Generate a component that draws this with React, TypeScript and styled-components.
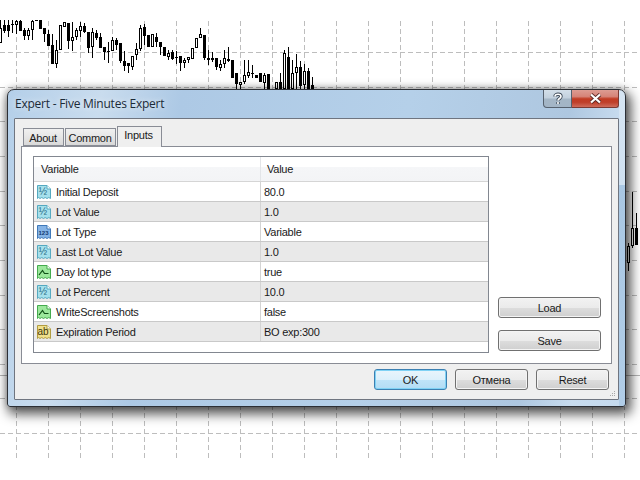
import React from 'react';
import styled, { createGlobalStyle } from 'styled-components';

const GlobalStyle = createGlobalStyle`
  html, body {
    margin: 0;
    padding: 0;
    background: #ffffff;
  }
`;

const Desktop = styled.div`
  position: relative;
  width: 640px;
  height: 480px;
  overflow: hidden;
  background: #ffffff;
  font-family: 'Liberation Sans', Arial, sans-serif;
  font-size: 11px;
  letter-spacing: -0.25px;
  color: #1a1a1a;
`;

const ChartSvg = styled.svg`
  position: absolute;
  left: 0;
  top: 0;
`;

const Window = styled.div`
  position: absolute;
  left: 7px;
  top: 89px;
  width: 619px;
  height: 318px;
  box-sizing: border-box;
  display: flex;
  flex-direction: column;
  padding: 0 6px 6px;
  border: 1px solid #2c2f35;
  border-radius: 7px 7px 3px 3px;
  background:
    linear-gradient(#d6e5f3 0, #cfe0f0 30%, #a9c7e3 30%, #b1cde7 100%) right / 6px 100% no-repeat,
    linear-gradient(100deg, #b4cfe9 0, #c9dcee 14%, #adc9e5 26%, #b5d0e9 60%, #aec7e0 84%, #c8dcef 92%, #c4d9ed 100%);
  box-shadow: 3px 5px 12px 2px rgba(0, 0, 0, 0.68), -1px -1px 6px rgba(0, 0, 0, 0.2);
`;

const TitleBar = styled.div`
  flex: none;
  height: 28px;
  display: flex;
  justify-content: space-between;
  align-items: flex-start;
`;

const Title = styled.div`
  padding: 5px 0 0 1px;
  font-family: 'Open Sans', sans-serif;
  font-size: 12px;
  letter-spacing: -0.24px;
  color: #1b2a38;
  text-shadow: 0 0 6px rgba(255, 255, 255, 0.8);
`;

const CaptionButtons = styled.div`
  display: flex;
`;

const CaptionButton = styled.div<{ $close?: boolean }>`
  height: 18px;
  width: ${(p) => (p.$close ? '47px' : '29px')};
  display: flex;
  align-items: center;
  justify-content: center;
  box-sizing: border-box;
  border: 1px solid ${(p) => (p.$close ? '#7c3a33' : '#56616e')};
  border-top: 0;
  border-left-width: ${(p) => (p.$close ? '0' : '1px')};
  border-radius: ${(p) => (p.$close ? '0 0 3px 0' : '0 0 0 4px')};
  background: ${(p) =>
    p.$close
      ? 'linear-gradient(#dd9c92 0, #d68478 38%, #c23c24 52%, #bf3f2a 72%, #cf6c5c 100%)'
      : 'linear-gradient(#d3dfe9 0, #c2d0dd 48%, #a4b6c6 52%, #a3b5c6 100%)'};
`;

const Client = styled.div`
  flex: 1;
  position: relative;
  display: flex;
  flex-direction: column;
  padding: 7px 6px 0;
  border: 1px solid #6f7580;
  border-radius: 1px;
  background: #efefef;
`;

const Tabs = styled.div`
  flex: none;
  height: 20px;
  display: flex;
  align-items: flex-end;
  padding-left: 2px;
  position: relative;
  z-index: 1;
`;

const Tab = styled.div<{ $active?: boolean; $w: number }>`
  box-sizing: border-box;
  width: ${(p) => p.$w}px;
  height: ${(p) => (p.$active ? '21px' : '18px')};
  margin-right: ${(p) => (p.$active ? '0' : '1px')};
  margin-bottom: ${(p) => (p.$active ? '-1px' : '0')};
  padding: ${(p) => (p.$active ? '2px 2px 0 0' : '3px 1px 0 0')};
  text-align: center;
  border: 1px solid #898c95;
  border-bottom: ${(p) => (p.$active ? '0' : '1px solid #898c95')};
  background: ${(p) => (p.$active ? '#efefef' : 'linear-gradient(#f0f0f0, #e6e6e6 50%, #d8d8d8)')};
`;

const TabPage = styled.div`
  flex: none;
  height: 218px;
  box-sizing: border-box;
  display: flex;
  gap: 9px;
  padding: 9px 10px 10px 11px;
  border: 1px solid #898c95;
  background: #ffffff;
`;

const ListView = styled.div`
  width: 456px;
  box-sizing: border-box;
  display: flex;
  flex-direction: column;
  border: 1px solid #828790;
`;

const HeaderRow = styled.div`
  flex: none;
  height: 25px;
  display: grid;
  grid-template-columns: 226px 1fr;
  align-items: center;
  box-sizing: border-box;
  background: linear-gradient(#ffffff 0, #ffffff 40%, #f5f6f8 42%, #f3f4f6 100%);
  border-bottom: 1px solid #d5d5d5;
`;

const HeaderCell = styled.div<{ $value?: boolean }>`
  height: 100%;
  display: flex;
  align-items: center;
  box-sizing: border-box;
  padding-left: ${(p) => (p.$value ? '6px' : '7px')};
  border-left: ${(p) => (p.$value ? '1px solid #e3e5e8' : '0')};
`;

const Row = styled.div<{ $shaded: boolean }>`
  flex: none;
  height: 20px;
  box-sizing: border-box;
  display: grid;
  grid-template-columns: 226px 1fr;
  align-items: stretch;
  background: ${(p) => (p.$shaded ? '#e9e9e9' : '#ffffff')};
  border-bottom: 1px solid #c9c9c9;
`;

const NameCell = styled.div`
  display: flex;
  align-items: center;
  gap: 4px;
  padding-left: 2px;
`;

const ValueCell = styled.div`
  display: flex;
  align-items: center;
  padding-left: 3px;
  border-left: 1px solid #d4d4d4;
`;

const SideColumn = styled.div`
  width: 103px;
  display: flex;
  flex-direction: column;
  justify-content: flex-end;
  gap: 12px;
  padding-bottom: 2px;
`;

const Button = styled.div<{ $default?: boolean; $w?: number }>`
  width: ${(p) => p.$w ?? 103}px;
  height: 21px;
  box-sizing: border-box;
  display: flex;
  align-items: center;
  justify-content: center;
  border: 1px solid ${(p) => (p.$default ? '#3c7fb1' : '#707070')};
  border-radius: 3px;
  box-shadow: inset 0 0 0 1px ${(p) => (p.$default ? '#7fd2f5' : '#f4f4f4')};
  background: ${(p) =>
    p.$default
      ? 'linear-gradient(#e9f5fc 0, #dcf0fb 50%, #bfe4f9 52%, #b3dcf4 100%)'
      : 'linear-gradient(#f2f2f2 0, #ebebeb 50%, #dddddd 52%, #cfcfcf 100%)'};
`;

const Footer = styled.div`
  flex: 1;
  display: flex;
  justify-content: flex-end;
  align-items: flex-start;
  gap: 8px;
  padding: 5px 3px 0 0;
`;

const Grip = styled.svg`
  position: absolute;
  right: 2px;
  bottom: 2px;
`;

// [wick top, wick bottom, body top, body bottom, hollow], one candle each 4px from x=0
type Candle = [number, number, number, number, number];
const CANDLES: (Candle | null)[] = [
  [20, 43, 28, 43, 1], [20, 33, 25, 31, 0], [20, 37, 25, 31, 0], [20, 33, 24, 25, 0], [20, 34, 21, 25, 1],
  [20, 31, 21, 31, 0], [28, 40, 30, 36, 0], [28, 40, 30, 36, 1], [20, 40, 21, 30, 1], [20, 21, 20, 21, 0],
  [20, 29, 20, 29, 0], [28, 42, 28, 34, 0], [30, 46, 34, 46, 0], [34, 64, 45, 64, 0], [40, 68, 50, 64, 1],
  [25, 50, 25, 50, 1], [22, 27, 22, 27, 1], [23, 49, 23, 41, 0], [22, 51, 37, 41, 1], [28, 40, 30, 37, 1],
  [22, 37, 26, 31, 1], [23, 33, 26, 32, 0], [32, 53, 32, 48, 0], [28, 58, 32, 47, 1], [30, 40, 33, 38, 0],
  [33, 48, 37, 48, 0], [47, 60, 47, 52, 0], [42, 63, 51, 52, 0], [37, 51, 40, 51, 1], [38, 50, 40, 45, 0],
  [43, 63, 43, 61, 0], [51, 71, 61, 66, 0], [63, 73, 63, 66, 0], [56, 70, 56, 67, 1], [43, 60, 49, 55, 1],
  [25, 51, 28, 49, 1], [24, 45, 27, 36, 0], [35, 47, 35, 47, 0], [34, 47, 34, 47, 1], [33, 47, 37, 42, 0],
  [42, 55, 42, 47, 0], [47, 56, 47, 56, 0], [50, 60, 53, 57, 1], [50, 60, 52, 59, 0], [51, 64, 57, 58, 0],
  [56, 71, 56, 63, 0], [58, 68, 60, 63, 1], [57, 63, 57, 60, 1], [48, 59, 48, 59, 1], [38, 48, 38, 48, 1],
  [28, 38, 34, 38, 1], [35, 60, 35, 58, 0], [50, 65, 58, 60, 0], [52, 62, 58, 60, 1], [58, 70, 58, 67, 0],
  [60, 71, 64, 68, 1], [50, 68, 58, 64, 1], [47, 62, 59, 61, 0], [60, 78, 60, 78, 0], [73, 89, 73, 84, 0],
  [82, 89, 82, 85, 1], [60, 84, 75, 82, 1], [60, 78, 72, 76, 1], [65, 78, 73, 74, 0], [75, 78, 75, 78, 0],
  [73, 82, 73, 82, 0], [73, 89, 75, 83, 1], [74, 89, 74, 89, 0], null, [82, 89, 82, 89, 1],
  [73, 89, 82, 89, 0], [50, 89, 53, 89, 1], [47, 89, 57, 89, 0], [60, 89, 73, 89, 1], [54, 89, 67, 73, 1],
  [61, 89, 67, 86, 0], [64, 89, 71, 85, 1], [68, 89, 71, 89, 0], [77, 89, 85, 89, 0],
];

const RIGHT_CANDLES: [number, Candle][] = [
  [628, [243, 271, 246, 263, 1]],
  [632, [192, 248, 228, 246, 1]],
  [636, [213, 245, 228, 245, 0]],
];

const V_GRID = Array.from({ length: 20 }, (_, i) => 16 + i * 32);
const H_GRID = [52, 87, 121, 156, 191, 225, 260, 295, 329, 364, 398, 433];

const CandleMark: React.FC<{ x: number; c: Candle }> = ({ x, c }) => {
  const [wt, wb, bt, bb, hollow] = c;
  return (
    <g>
      <rect x={x} y={wt} width={1} height={wb - wt} fill="#000" />
      <rect x={x - 1} y={bt} width={3} height={Math.max(bb - bt, 1)} fill="#000" />
      {hollow === 1 && bb - bt > 2 && <rect x={x} y={bt + 1} width={1} height={bb - bt - 2} fill="#fff" />}
    </g>
  );
};

const Chart: React.FC = () => (
  <ChartSvg width={640} height={480} shapeRendering="crispEdges">
    {V_GRID.map((x) => (
      <line key={x} x1={x + 0.5} x2={x + 0.5} y1={21} y2={460} stroke="#bdbdbd" strokeDasharray="5 3" />
    ))}
    {H_GRID.map((y) => (
      <line key={y} x1={0} x2={637} y1={y + 0.5} y2={y + 0.5} stroke="#bdbdbd" strokeDasharray="5 3" />
    ))}
    <line x1={0} x2={640} y1={375.5} y2={375.5} stroke="#b4b4b4" />
    {CANDLES.map((c, i) => c && <CandleMark key={i} x={i * 4} c={c} />)}
    {RIGHT_CANDLES.map(([x, c]) => (
      <CandleMark key={x} x={x} c={c} />
    ))}
  </ChartSvg>
);

type IconKind = 'real' | 'int' | 'bool' | 'text';

const ICON_COLORS: Record<IconKind, [string, string, string]> = {
  real: ['#a6e0ec', '#55a9c0', '#1f6a84'],
  int: ['#86b4e6', '#3f78b8', '#123a72'],
  bool: ['#9ce89c', '#44aa4e', '#0f5017'],
  text: ['#f0e08c', '#b09c40', '#3f370a'],
};

const TypeIcon: React.FC<{ kind: IconKind }> = ({ kind }) => {
  const [fill, edge, ink] = ICON_COLORS[kind];
  return (
    <svg width={16} height={16} viewBox="0 0 16 16">
      <path
        d="M1.5 1.5 H11 L14.5 5 V14.5 L12.8 13.5 L11 14.5 L9.2 13.5 L7.5 14.5 L5.7 13.5 L4 14.5 L2.6 13.5 L1.5 14.5 Z"
        fill={fill}
        stroke={edge}
      />
      <path d="M11 1.5 V5 H14.5" fill="#ffffff" stroke={edge} />
      {kind === 'bool' && <path d="M3 11 L6.5 6.5 L8.5 9.5 H12.5" fill="none" stroke={ink} strokeWidth={1.2} />}
      {kind !== 'bool' && (
        <text
          x={kind === 'int' ? 7.5 : 7}
          y={11}
          textAnchor="middle"
          fontFamily="'Liberation Sans', sans-serif"
          fontWeight={kind === 'int' ? 700 : 400}
          fontSize={kind === 'text' ? 10 : kind === 'int' ? 6 : 10}
          letterSpacing={0}
          fill={ink}
        >
          {kind === 'real' ? '½' : kind === 'int' ? '123' : 'ab'}
        </text>
      )}
    </svg>
  );
};

const HelpGlyph: React.FC = () => (
  <svg width={12} height={14} viewBox="0 0 12 14">
    <path d="M3 4.5 C3 1.5 9 1.5 9 4.5 C9 6.5 6 6.5 6 8.5 M6 10 V12" fill="none" stroke="#3e4a58" strokeWidth={3.4} />
    <path d="M3 4.5 C3 1.5 9 1.5 9 4.5 C9 6.5 6 6.5 6 8.5 M6 10 V12" fill="none" stroke="#ffffff" strokeWidth={1.6} />
  </svg>
);

const CloseGlyph: React.FC = () => (
  <svg width={13} height={11} viewBox="0 0 13 11">
    <path d="M2 1.5 L11 9.5 M11 1.5 L2 9.5" fill="none" stroke="#5a2a26" strokeWidth={3.8} />
    <path d="M2 1.5 L11 9.5 M11 1.5 L2 9.5" fill="none" stroke="#ffffff" strokeWidth={2.2} />
  </svg>
);

const PARAMS: { name: string; value: string; kind: IconKind }[] = [
  { name: 'Initial Deposit', value: '80.0', kind: 'real' },
  { name: 'Lot Value', value: '1.0', kind: 'real' },
  { name: 'Lot Type', value: 'Variable', kind: 'int' },
  { name: 'Last Lot Value', value: '1.0', kind: 'real' },
  { name: 'Day lot type', value: 'true', kind: 'bool' },
  { name: 'Lot Percent', value: '10.0', kind: 'real' },
  { name: 'WriteScreenshots', value: 'false', kind: 'bool' },
  { name: 'Expiration Period', value: 'BO exp:300', kind: 'text' },
];

const App: React.FC = () => (
  <Desktop>
    <GlobalStyle />
    <Chart />
    <Window>
      <TitleBar>
        <Title>Expert - Five Minutes Expert</Title>
        <CaptionButtons>
          <CaptionButton>
            <HelpGlyph />
          </CaptionButton>
          <CaptionButton $close>
            <CloseGlyph />
          </CaptionButton>
        </CaptionButtons>
      </TitleBar>
      <Client>
        <Tabs>
          <Tab $w={41}>About</Tab>
          <Tab $w={51}>Common</Tab>
          <Tab $w={45} $active>
            Inputs
          </Tab>
        </Tabs>
        <TabPage>
          <ListView>
            <HeaderRow>
              <HeaderCell>Variable</HeaderCell>
              <HeaderCell $value>Value</HeaderCell>
            </HeaderRow>
            {PARAMS.map((p, i) => (
              <Row key={p.name} $shaded={i % 2 === 1}>
                <NameCell>
                  <TypeIcon kind={p.kind} />
                  {p.name}
                </NameCell>
                <ValueCell>{p.value}</ValueCell>
              </Row>
            ))}
          </ListView>
          <SideColumn>
            <Button>Load</Button>
            <Button>Save</Button>
          </SideColumn>
        </TabPage>
        <Footer>
          <Button $w={73} $default>
            OK
          </Button>
          <Button $w={73}>Отмена</Button>
          <Button $w={73}>Reset</Button>
        </Footer>
        <Grip width={6} height={6} viewBox="0 0 6 6">
          <path d="M4 0h1v1H4zM2 2h1v1H2zM4 2h1v1H4zM0 4h1v1H0zM2 4h1v1H2zM4 4h1v1H4z" fill="#a8a8a8" />
        </Grip>
      </Client>
    </Window>
  </Desktop>
);

export default App;
